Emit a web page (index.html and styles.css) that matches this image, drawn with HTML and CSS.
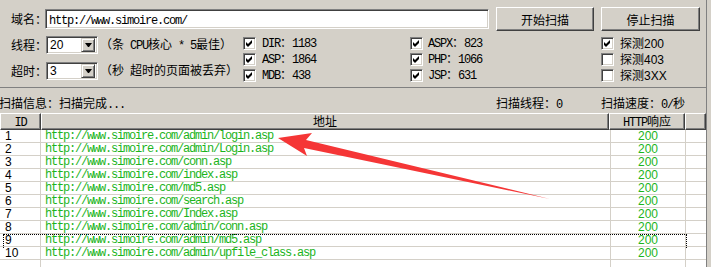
FILE: index.html
```html
<!DOCTYPE html>
<html lang="zh-CN">
<head>
    <meta charset="UTF-8">
    <title>目录扫描</title>
    <link rel="stylesheet" href="styles.css">
</head>
<body>
    <div class="window">
        <div class="top">
            <div class="row-domain">
                <span class="label">域名：</span>
                <div class="field domain"><span class="mono">http://www.simoire.com/</span></div>
                <button class="btn btn-start">开始扫描</button>
                <button class="btn btn-stop">停止扫描</button>
            </div>

            <div class="lower">
                <div class="opts">
                    <div class="opt-row">
                        <span class="label">线程：</span>
                        <div class="field combo">
                            <span class="combo-val">20</span>
                            <span class="combo-btn"><svg width="7" height="4" viewBox="0 0 7 4"><polygon points="0,0 7,0 4,4 3,4" fill="#000"/></svg></span>
                        </div>
                        <span class="hint">（条<span class="mono"> CPU</span>核心<span class="mono"> * 5</span>最佳）</span>
                    </div>
                    <div class="opt-row">
                        <span class="label">超时：</span>
                        <div class="field combo">
                            <span class="combo-val">3</span>
                            <span class="combo-btn"><svg width="7" height="4" viewBox="0 0 7 4"><polygon points="0,0 7,0 4,4 3,4" fill="#000"/></svg></span>
                        </div>
                        <span class="hint">（秒<span class="mono"> </span>超时的页面被丢弃）</span>
                    </div>
                </div>

                <div class="checks col1">
                    <div class="chk"><span class="cb"><svg width="7" height="7" viewBox="0 0 7 7"><polygon points="0,2 2,4 6,0 6,3 2,7 0,5" fill="#000"/></svg></span><span class="txt"><span class="mono">DIR</span>：<span class="mono">1183</span></span></div>
                    <div class="chk"><span class="cb"><svg width="7" height="7" viewBox="0 0 7 7"><polygon points="0,2 2,4 6,0 6,3 2,7 0,5" fill="#000"/></svg></span><span class="txt"><span class="mono">ASP</span>：<span class="mono">1864</span></span></div>
                    <div class="chk"><span class="cb"><svg width="7" height="7" viewBox="0 0 7 7"><polygon points="0,2 2,4 6,0 6,3 2,7 0,5" fill="#000"/></svg></span><span class="txt"><span class="mono">MDB</span>：<span class="mono">438</span></span></div>
                </div>

                <div class="checks col2">
                    <div class="chk"><span class="cb"><svg width="7" height="7" viewBox="0 0 7 7"><polygon points="0,2 2,4 6,0 6,3 2,7 0,5" fill="#000"/></svg></span><span class="txt"><span class="mono">ASPX</span>：<span class="mono">823</span></span></div>
                    <div class="chk"><span class="cb"><svg width="7" height="7" viewBox="0 0 7 7"><polygon points="0,2 2,4 6,0 6,3 2,7 0,5" fill="#000"/></svg></span><span class="txt"><span class="mono">PHP</span>：<span class="mono">1066</span></span></div>
                    <div class="chk"><span class="cb"><svg width="7" height="7" viewBox="0 0 7 7"><polygon points="0,2 2,4 6,0 6,3 2,7 0,5" fill="#000"/></svg></span><span class="txt"><span class="mono">JSP</span>：<span class="mono">631</span></span></div>
                </div>

                <div class="checks col3">
                    <div class="chk"><span class="cb"><svg width="7" height="7" viewBox="0 0 7 7"><polygon points="0,2 2,4 6,0 6,3 2,7 0,5" fill="#000"/></svg></span><span class="txt">探测<span class="num">200</span></span></div>
                    <div class="chk"><span class="cb"></span><span class="txt">探测<span class="num">403</span></span></div>
                    <div class="chk"><span class="cb"></span><span class="txt">探测<span class="num">3XX</span></span></div>
                </div>
            </div>
        </div>

        <div class="info">
            <span class="info-msg">扫描信息：扫描完成<span class="mono">...</span></span>
            <span>扫描线程：<span class="mono">0</span></span>
            <span>扫描速度：<span class="mono">0/</span>秒</span>
        </div>

        <div class="list">
            <div class="head">
                <div class="hcell h-id"><span class="mono">ID</span></div>
                <div class="hcell h-url">地址</div>
                <div class="hcell h-code"><span class="mono">HTTP</span>响应</div>
                <div class="hcell h-end"></div>
            </div>
            <div class="rows">
                <div class="row"><div class="c-id">1</div><div class="c-url">http://www.simoire.com/admin/login.asp</div><div class="c-code">200</div><div class="c-end"></div></div>
                <div class="row"><div class="c-id">2</div><div class="c-url">http://www.simoire.com/admin/Login.asp</div><div class="c-code">200</div><div class="c-end"></div></div>
                <div class="row"><div class="c-id">3</div><div class="c-url">http://www.simoire.com/conn.asp</div><div class="c-code">200</div><div class="c-end"></div></div>
                <div class="row"><div class="c-id">4</div><div class="c-url">http://www.simoire.com/index.asp</div><div class="c-code">200</div><div class="c-end"></div></div>
                <div class="row"><div class="c-id">5</div><div class="c-url">http://www.simoire.com/md5.asp</div><div class="c-code">200</div><div class="c-end"></div></div>
                <div class="row"><div class="c-id">6</div><div class="c-url">http://www.simoire.com/search.asp</div><div class="c-code">200</div><div class="c-end"></div></div>
                <div class="row"><div class="c-id">7</div><div class="c-url">http://www.simoire.com/Index.asp</div><div class="c-code">200</div><div class="c-end"></div></div>
                <div class="row"><div class="c-id">8</div><div class="c-url">http://www.simoire.com/admin/conn.asp</div><div class="c-code">200</div><div class="c-end"></div></div>
                <div class="row focused"><div class="c-id">9</div><div class="c-url">http://www.simoire.com/admin/md5.asp</div><div class="c-code">200</div><div class="c-end"></div></div>
                <div class="row"><div class="c-id">10</div><div class="c-url">http://www.simoire.com/admin/upfile_class.asp</div><div class="c-code">200</div><div class="c-end"></div></div>
                <div class="row filler"><div class="c-id"></div><div class="c-url"></div><div class="c-code"></div><div class="c-end"></div></div>
            </div>
        </div>

        <!-- 标注箭头 -->
        <svg class="arrow" width="711" height="267" viewBox="0 0 711 267">
            <polygon points="278,138 312,133 306,140 550,199 304,148 307,156" fill="#f53636"/>
        </svg>
    </div>
</body>
</html>
```

FILE: styles.css
```css
* {
    margin: 0;
    padding: 0;
    box-sizing: border-box;
}

body {
    background-color: #d4d0c8;
    font-family: "Noto Sans CJK SC", sans-serif;
    font-size: 12px;
    line-height: 14px;
    color: #000;
    width: 711px;
    height: 267px;
    overflow: hidden;
}

.window {
    position: relative;
    width: 707px;
    height: 267px;
    border-right: 1px solid #808080;
}

.mono {
    font-family: "Liberation Mono", monospace;
    font-size: 12px;
    letter-spacing: -1.2px;
}

.num {
    font-family: "Liberation Sans", sans-serif;
    font-size: 12px;
}

/* 上方设置区 */
.top {
    height: 88px;
    padding-top: 7px;
    border-bottom: 1px solid #808080;
}

.row-domain {
    display: flex;
    align-items: center;
    height: 24px;
}

.label {
    padding-left: 11px;
    width: 45px;
    white-space: nowrap;
}

.field {
    background-color: #fff;
    border: 1px solid;
    border-color: #808080 #fff #fff #808080;
    box-shadow: inset 1px 1px #404040, inset -1px -1px #d4d0c8;
}

.domain {
    width: 444px;
    height: 20px;
    padding: 2px 0 0 3px;
}

.btn {
    height: 24px;
    margin-left: 7px;
    background-color: #d4d0c8;
    border: 1px solid;
    border-color: #fff #404040 #404040 #fff;
    box-shadow: inset -1px -1px #808080;
    font-family: "Noto Sans CJK SC", sans-serif;
    font-size: 12px;
    color: #000;
}

.btn-start {
    width: 98px;
}

.btn-stop {
    width: 99px;
}

.lower {
    display: flex;
    margin-top: 5px;
}

.opts {
    width: 243px;
    display: flex;
    flex-direction: column;
    gap: 8px;
}

.opt-row {
    display: flex;
    align-items: center;
    height: 18px;
}

.opt-row .label {
    width: 46px;
}

.combo {
    width: 52px;
    height: 18px;
    display: flex;
    align-items: center;
    padding: 2px;
}

.combo-val {
    flex: 1;
    font-family: "Liberation Sans", sans-serif;
    font-size: 12px;
    padding-left: 1px;
}

.combo-btn {
    width: 14px;
    height: 14px;
    display: flex;
    align-items: center;
    justify-content: center;
    background-color: #d4d0c8;
    border: 1px solid;
    border-color: #d4d0c8 #404040 #404040 #d4d0c8;
    box-shadow: inset 1px 1px #fff, inset -1px -1px #808080;
}

.combo-btn svg {
    display: block;
}

.hint {
    margin-left: 2px;
    white-space: nowrap;
}

.checks {
    display: flex;
    flex-direction: column;
    margin-top: -1px;
}

.col1 {
    width: 167px;
}

.col2 {
    width: 191px;
}

.chk {
    display: flex;
    align-items: center;
    height: 16px;
    white-space: nowrap;
}

.cb {
    width: 13px;
    height: 13px;
    display: flex;
    align-items: center;
    justify-content: center;
    background-color: #fff;
    border: 1px solid;
    border-color: #808080 #fff #fff #808080;
    box-shadow: inset 1px 1px #404040, inset -1px -1px #d4d0c8;
}

.cb svg {
    display: block;
}

.chk .txt {
    margin-left: 6px;
}

.col2 .chk .txt {
    margin-left: 5px;
}

/* 扫描信息 */
.info {
    display: grid;
    grid-template-columns: 496px 105px 1fr;
    height: 25px;
    padding-top: 8px;
    white-space: nowrap;
}

.info-msg {
    margin-left: -1px;
}

/* 结果列表 */
.list {
    background-color: #fff;
    height: 154px;
    overflow: hidden;
}

.head {
    display: flex;
    height: 17px;
    background-color: #d4d0c8;
}

.hcell {
    height: 17px;
    border: 1px solid;
    border-color: #fff #404040 #404040 #fff;
    box-shadow: inset -1px -1px #808080;
    text-align: center;
    line-height: 14px;
    white-space: nowrap;
}

.h-id {
    width: 41px;
}

.h-url {
    width: 568px;
}

.h-code {
    width: 76px;
}

.h-end {
    flex: 1;
}

.row {
    position: relative;
    display: flex;
    height: 13px;
    border-bottom: 1px solid #d4d0c8;
    line-height: 12px;
}

.row > div {
    border-right: 1px solid #d4d0c8;
    white-space: nowrap;
}

.c-id {
    width: 41px;
    padding-left: 5px;
    font-family: "Liberation Sans", sans-serif;
    font-size: 12px;
}

.c-url {
    width: 570px;
    padding-left: 4px;
    color: #1cb41c;
    font-family: "Liberation Mono", monospace;
    font-size: 12px;
    letter-spacing: -1.2px;
}

.c-code {
    width: 75px;
    text-align: center;
    color: #1cb41c;
    font-family: "Liberation Sans", sans-serif;
    font-size: 12px;
}

.row > .c-end {
    flex: 1;
    border-right: none;
}

.row.filler {
    height: 20px;
    border-bottom: none;
}

.row.focused::after {
    content: "";
    position: absolute;
    left: 3px;
    top: 0;
    width: 682px;
    height: 13px;
    border: 1px dotted #000;
    border-bottom: none;
}

.arrow {
    position: absolute;
    left: 0;
    top: 0;
    pointer-events: none;
}
```
